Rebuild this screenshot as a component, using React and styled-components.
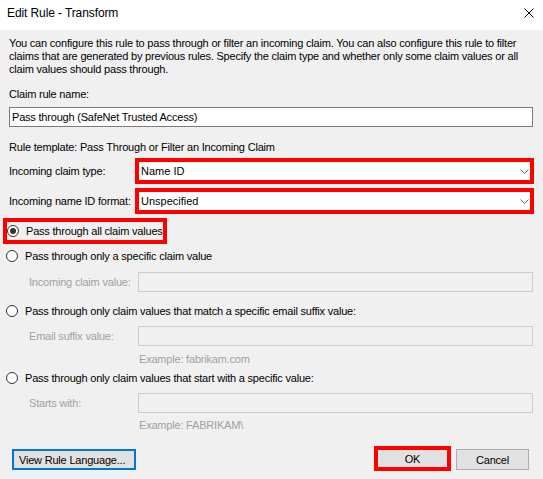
import React from "react";
import styled, { createGlobalStyle } from "styled-components";

const Global = createGlobalStyle`
  html, body { margin: 0; padding: 0; background: #f0f0f0; }
  body {
    font-family: "Liberation Sans", Arial, sans-serif;
    font-size: 11px;
    letter-spacing: -0.2px;
    color: #000;
  }
`;

const Window = styled.div`
  width: 543px;
  height: 479px;
  background: #f0f0f0;
  overflow: hidden;
  display: flex;
  flex-direction: column;
`;

const TitleBar = styled.div`
  height: 30px;
  flex: none;
  background: #fff;
  display: flex;
  align-items: flex-start;
  justify-content: space-between;
  padding: 0 9px 0 7px;
  box-sizing: border-box;
`;

const Title = styled.div`
  font-size: 12px;
  letter-spacing: -0.1px;
  line-height: 16px;
  margin-top: 5px;
`;

const Close = styled.svg`
  margin-top: 8px;
  width: 10px;
  height: 10px;
`;

const Body = styled.div`
  padding: 7px 10px 0 9px;
  display: flex;
  flex-direction: column;
`;

const Text = styled.div`
  line-height: 13px;
  margin-top: ${(p) => p.$mt || 0}px;
  color: ${(p) => (p.$disabled ? "#a0a0a0" : "#000")};
  padding-left: ${(p) => p.$indent || 0}px;
  white-space: nowrap;
`;

const TextInput = styled.div`
  margin-top: 6px;
  height: 20px;
  box-sizing: border-box;
  border: 1px solid #7a7a7a;
  background: #fff;
  display: flex;
  align-items: center;
  padding-left: 2px;
`;

const ComboRow = styled.div`
  margin-top: 4px;
  display: grid;
  grid-template-columns: 126px 399px;
  align-items: center;
  height: 26px;
`;

const RedFrame = styled.div`
  border: 4px solid #ff0000;
  box-sizing: border-box;
`;

const ComboFrame = styled(RedFrame)`
  height: 26px;
`;

const Combo = styled.div`
  height: 18px;
  background: #fff;
  display: flex;
  align-items: center;
  justify-content: space-between;
  padding: 0 1px 0 2px;
  letter-spacing: 0;
`;

const Chevron = () => (
  <svg width="9" height="5" viewBox="0 0 9 5">
    <path d="M0.5 0.5 L4.5 4.5 L8.5 0.5" fill="none" stroke="#606060" strokeWidth="1" />
  </svg>
);

const RadioRow = styled.div`
  display: flex;
  align-items: center;
  gap: 7px;
  height: 16px;
  margin-top: ${(p) => p.$mt || 0}px;
  margin-left: -3px;
`;

const RadioFrame = styled(RedFrame)`
  margin-top: 4px;
  margin-left: -6px;
  width: 164px;
  height: 26px;
  display: flex;
  align-items: center;
  & > ${RadioRow} {
    margin-left: 0;
  }
`;

const Circle = styled.span`
  width: 12px;
  height: 12px;
  box-sizing: border-box;
  border-radius: 50%;
  border: 1px solid #333;
  background: #fff;
  display: flex;
  align-items: center;
  justify-content: center;
  flex: none;
  &::after {
    content: "";
    width: 6px;
    height: 6px;
    border-radius: 50%;
    background: ${(p) => (p.$checked ? "#333" : "transparent")};
  }
`;

const DisabledRow = styled.div`
  margin-top: ${(p) => p.$mt || 0}px;
  display: grid;
  grid-template-columns: 109px 1fr;
  align-items: center;
  padding-left: 20px;
  height: 20px;
`;

const DisabledField = styled.div`
  height: 20px;
  box-sizing: border-box;
  border: 1px solid #cccccc;
  background: #f0f0f0;
`;

const ButtonRow = styled.div`
  margin-top: 14px;
  height: 25px;
  display: flex;
  align-items: flex-start;
  padding: 0 4px 0 3px;
`;

const Button = styled.div`
  margin-top: 3px;
  height: 21px;
  box-sizing: border-box;
  width: ${(p) => p.$w}px;
  background: #e1e1e1;
  border: ${(p) => (p.$focus ? "2px solid #0078d7" : "1px solid #adadad")};
  display: flex;
  align-items: center;
  justify-content: ${(p) => (p.$left ? "flex-start" : "center")};
  padding-left: ${(p) => (p.$left ? "5px" : "0")};
`;

const Spacer = styled.div`
  flex: 1;
`;

const OkFrame = styled(RedFrame)`
  width: 77px;
  height: 25px;
  background: #e1e1e1;
  display: flex;
  align-items: center;
  justify-content: center;
  margin-right: 5px;
`;

const Radio = ({ checked, children, mt }) => (
  <RadioRow $mt={mt}>
    <Circle $checked={checked} />
    <span>{children}</span>
  </RadioRow>
);

export default function App() {
  return (
    <Window>
      <Global />
      <TitleBar>
        <Title>Edit Rule - Transform</Title>
        <Close viewBox="0 0 10 10">
          <path d="M0.5 0.5 L9.5 9.5 M9.5 0.5 L0.5 9.5" stroke="#000" strokeWidth="1" />
        </Close>
      </TitleBar>
      <Body>
        <Text>
          You can configure this rule to pass through or filter an incoming claim. You can also configure this rule to filter
          <br />
          claims that are generated by previous rules. Specify the claim type and whether only some claim values or all
          <br />
          claim values should pass through.
        </Text>
        <Text $mt={12}>Claim rule name:</Text>
        <TextInput>Pass through (SafeNet Trusted Access)</TextInput>
        <Text $mt={14}>Rule template: Pass Through or Filter an Incoming Claim</Text>
        <ComboRow>
          <span>Incoming claim type:</span>
          <ComboFrame>
            <Combo>
              <span>Name ID</span>
              <Chevron />
            </Combo>
          </ComboFrame>
        </ComboRow>
        <ComboRow>
          <span>Incoming name ID format:</span>
          <ComboFrame>
            <Combo>
              <span>Unspecified</span>
              <Chevron />
            </Combo>
          </ComboFrame>
        </ComboRow>
        <RadioFrame>
          <Radio checked>Pass through all claim values</Radio>
        </RadioFrame>
        <Radio mt={4}>Pass through only a specific claim value</Radio>
        <DisabledRow $mt={8}>
          <Text $disabled>Incoming claim value:</Text>
          <DisabledField />
        </DisabledRow>
        <Radio mt={11}>Pass through only claim values that match a specific email suffix value:</Radio>
        <DisabledRow $mt={7}>
          <Text $disabled>Email suffix value:</Text>
          <DisabledField />
        </DisabledRow>
        <Text $mt={7} $indent={130} $disabled>Example: fabrikam.com</Text>
        <Radio mt={4}>Pass through only claim values that start with a specific value:</Radio>
        <DisabledRow $mt={7}>
          <Text $disabled>Starts with:</Text>
          <DisabledField />
        </DisabledRow>
        <Text $mt={6} $indent={130} $disabled>Example: FABRIKAM\</Text>
        <ButtonRow>
          <Button $w={124} $focus $left>View Rule Language...</Button>
          <Spacer />
          <OkFrame>OK</OkFrame>
          <Button $w={73}>Cancel</Button>
        </ButtonRow>
      </Body>
    </Window>
  );
}
